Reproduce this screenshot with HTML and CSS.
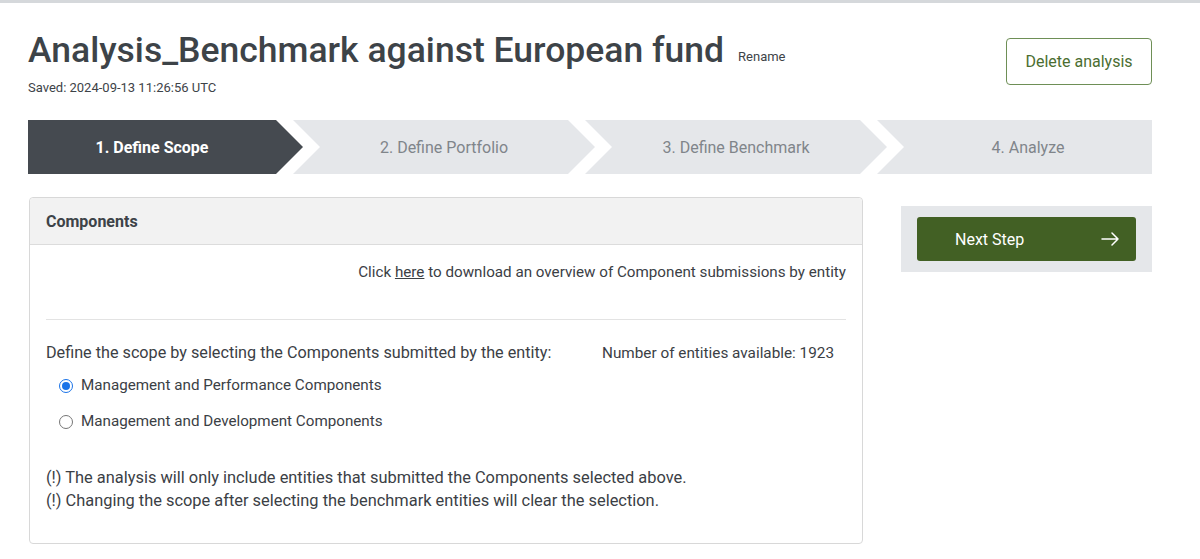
FILE: index.html
```html
<!DOCTYPE html>
<html>
<head>
<meta charset="utf-8">
<link rel="stylesheet" href="styles.css">
</head>
<body>
<div class="topline"></div>
<div class="page">
  <header class="head">
    <div class="head-left">
      <div class="title-row">
        <h1 class="title">Analysis_Benchmark against European fund</h1>
        <span class="rename">Rename</span>
      </div>
      <div class="saved">Saved: 2024-09-13 11:26:56 UTC</div>
    </div>
    <button class="btn-outline">Delete analysis</button>
  </header>

  <nav class="stepper">
    <div class="step step-first active">1. Define Scope</div>
    <div class="step step-mid">2. Define Portfolio</div>
    <div class="step step-mid">3. Define Benchmark</div>
    <div class="step step-last">4. Analyze</div>
  </nav>

  <div class="content">
    <section class="panel">
      <div class="panel-head">Components</div>
      <div class="panel-body">
        <p class="download">Click <a class="link">here</a> to download an overview of Component submissions by entity</p>
        <hr class="divider">
        <div class="scope-row">
          <span class="scope-label">Define the scope by selecting the Components submitted by the entity:</span>
          <span class="count">Number of entities available: 1923</span>
        </div>
        <div class="radios">
          <label class="radio"><span class="dot checked"></span>Management and Performance Components</label>
          <label class="radio"><span class="dot"></span>Management and Development Components</label>
        </div>
        <div class="notes">
          <p>(!) The analysis will only include entities that submitted the Components selected above.</p>
          <p>(!) Changing the scope after selecting the benchmark entities will clear the selection.</p>
        </div>
      </div>
    </section>
    <aside class="side">
      <button class="btn-next"><span>Next Step</span>
        <svg class="arrow" width="18" height="14" viewBox="0 0 18 14" fill="none" stroke="#fff" stroke-width="1.5" stroke-linecap="round" stroke-linejoin="round"><path d="M1 7H17M11 1L17 7L11 13"/></svg>
      </button>
    </aside>
  </div>
</div>
</body>
</html>
```
FILE: styles.css
```css
* { box-sizing: border-box; }
html, body { margin: 0; padding: 0; }
body {
  font-family: Roboto, "Liberation Sans", sans-serif;
  color: #3b4045;
  background: #fff;
}
.topline { height: 3px; background: #d5d8db; }
.page { padding: 0 48px 0 28px; }
.head {
  display: flex;
  justify-content: space-between;
  align-items: flex-start;
  padding-top: 26px;
}
.title-row { display: flex; align-items: baseline; gap: 14px; }
.title {
  margin: 0;
  font-size: 35.5px;
  font-weight: 500;
  color: #3d4348;
  line-height: 42px;
}
.rename { font-size: 13px; color: #3d4348; position: relative; top: -1px; }
.saved { font-size: 13px; color: #3d4348; margin-top: 9px; }
.btn-outline {
  margin-top: 9px;
  width: 146px;
  height: 47px;
  border: 1.5px solid #6e8f56;
  border-radius: 4px;
  background: #fff;
  color: #4b6e31;
  font-family: inherit;
  font-size: 16px;
}
.stepper {
  display: flex;
  margin-top: 25px;
  height: 54px;
}
.step {
  display: flex;
  align-items: center;
  justify-content: center;
  font-size: 16px;
  color: #80858a;
  background: #e5e7ea;
  padding: 0 27px;
  margin-left: -10px;
}
.step-first {
  width: 275px;
  margin-left: 0;
  padding-left: 0;
  clip-path: polygon(0 0, calc(100% - 27px) 0, 100% 50%, calc(100% - 27px) 100%, 0 100%);
}
.step-mid {
  width: 302px;
  clip-path: polygon(0 0, calc(100% - 27px) 0, 100% 50%, calc(100% - 27px) 100%, 0 100%, 27px 50%);
}
.step-last {
  width: 275px;
  padding-right: 0;
  clip-path: polygon(0 0, 100% 0, 100% 100%, 0 100%, 27px 50%);
}
.step.active { background: #454a50; color: #fff; font-weight: 700; }
.content {
  display: flex;
  align-items: flex-start;
  gap: 38px;
  margin-top: 23px;
}
.panel {
  width: 834px;
  border: 1px solid #d8d8d8;
  border-radius: 4px;
  margin-left: 1px;
}
.panel-head {
  background: #f2f2f2;
  border-bottom: 1px solid #dcdcdc;
  height: 47px;
  padding: 0 16px;
  display: flex;
  align-items: center;
  font-weight: 700;
  font-size: 16px;
  color: #3d4348;
  border-radius: 4px 4px 0 0;
}
.panel-body { padding: 17px 16px 31px 16px; font-size: 16px; line-height: 20px; }
.download { margin: 0; text-align: right; font-size: 15.2px; }
.link { text-decoration: underline; color: inherit; }
.divider { border: 0; border-top: 1px solid #e3e3e3; margin: 37px 0 0 0; }
.scope-row {
  display: flex;
  align-items: baseline;
  margin-top: 23px;
  padding-right: 12px;
}
.scope-label { font-size: 16.2px; }
.count { margin-left: auto; font-size: 15.3px; }
.radios { display: flex; flex-direction: column; gap: 16px; margin-top: 12px; padding-left: 13px; font-size: 15.2px; }
.radio { display: flex; align-items: center; gap: 8px; }
.dot {
  width: 14px; height: 14px;
  border: 1px solid #767676;
  border-radius: 50%;
  display: inline-block;
  position: relative;
  top: 1px;
}
.dot.checked { border-color: #1a73e8; }
.dot.checked::after {
  content: "";
  position: absolute;
  left: 2px; top: 2px;
  width: 8px; height: 8px;
  border-radius: 50%;
  background: #1a73e8;
}
.notes { margin-top: 35px; line-height: 23px; font-size: 16.4px; }
.notes p { margin: 0; }
.side {
  width: 251px;
  background: #e5e7ea;
  padding: 11px 16px;
  margin-top: 9px;
}
.btn-next {
  width: 219px;
  height: 44px;
  background: #426024;
  border: 0;
  border-radius: 3px;
  color: #fff;
  font-family: inherit;
  font-size: 16px;
  display: flex;
  align-items: center;
  justify-content: space-between;
  padding: 0 17px 0 38px;
}
.arrow { display: block; }
```
